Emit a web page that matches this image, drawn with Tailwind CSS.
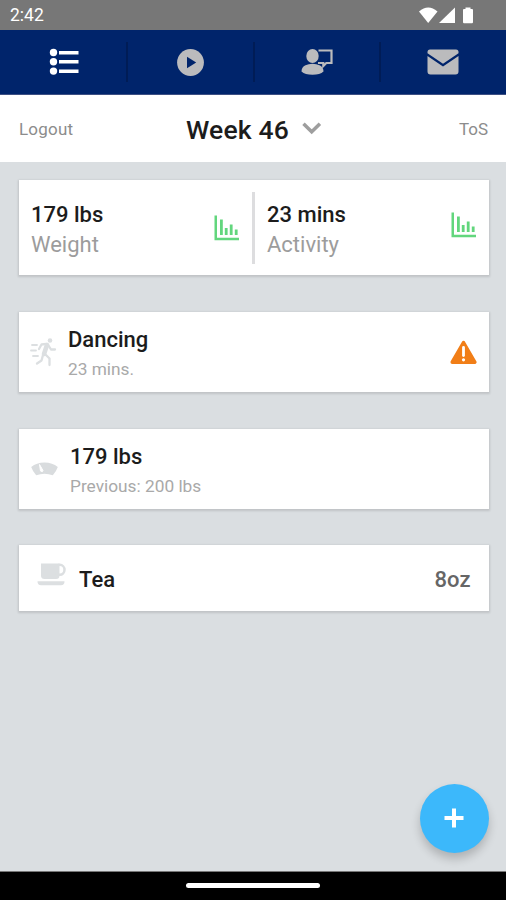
<!DOCTYPE html>
<html lang="en">
<head>
    <meta charset="UTF-8">
    <meta name="viewport" content="width=device-width, initial-scale=1.0">
    <title>Week 46</title>
    <script src="https://cdn.jsdelivr.net/npm/@tailwindcss/browser@4"></script>
</head>
<body class="bg-[#dadee1] font-['Roboto',sans-serif]">
    <div class="w-[506px] h-[900px] flex flex-col overflow-hidden whitespace-nowrap">

        <!-- Status bar -->
        <div class="h-[30px] shrink-0 bg-[#777777] text-white flex items-center justify-between pl-[10px] pr-[32px]">
            <span class="text-[17.500px] leading-none pt-[2px]">2:42</span>
            <svg class="w-[55px] h-[17px]" viewBox="0 0 55 17" fill="#fff">
                <path d="M0 4.500Q9.200-3.500 18.500 4.500L9.200 16z"/>
                <path d="M20 16L36 0.500V16z"/>
                <path d="M46.500 0.500h5v1.500h1.500q1 0 1 1v12q0 1.200-1 1.200h-8q-1 0-1-1.200V3q0-1 1-1h1.500z"/>
            </svg>
        </div>

        <!-- Tabs -->
        <nav class="h-[65px] shrink-0 bg-[#00246b] grid grid-cols-[127px_127px_126px_126px] border-b border-[#3d4f83]">
            <a class="flex items-center justify-center relative">
                <svg class="w-[30px] h-[28px]" viewBox="0 0 30 28" fill="#fff">
                    <circle cx="4.500" cy="4.500" r="3.700"/>
                    <circle cx="4.500" cy="13.800" r="3.700"/>
                    <circle cx="4.500" cy="23.100" r="3.700"/>
                    <path d="M10 2.900h19.500v3.500H10zM10 12.100h19.500v3.500H10zM10 21.400h19.500v3.500H10z"/>
                </svg>
                <span class="absolute -right-px top-3 w-[2px] h-10 bg-[#001c56]"></span>
            </a>
            <a class="flex items-center justify-center relative">
                <svg class="w-[28px] h-[28px]" viewBox="0 0 28 28">
                    <circle cx="13.500" cy="14.500" r="13.400" fill="#bbbbbd"/>
                    <path d="M10 8.700v11.600l9.200-5.800z" fill="#00246b"/>
                </svg>
                <span class="absolute -right-px top-3 w-[2px] h-10 bg-[#001c56]"></span>
            </a>
            <a class="flex items-center justify-center relative">
                <svg class="w-[32px] h-[28px]" viewBox="0 0 32 28" fill="#bbbbbd">
                    <path d="M17.500 2.500h13v12.500h-5.200l-3 3v-3H17" fill="none" stroke="#bbbbbd" stroke-width="2.200"/>
                    <ellipse cx="11.500" cy="8" rx="6.200" ry="7"/>
                    <path d="M0.500 23.500q0-4.500 4-6.300 3-1.500 7-1.500t7 1.500q4 1.800 4 6.300-3.500 3.300-11 3.300t-11-3.300z"/>
                </svg>
                <span class="absolute -right-px top-3 w-[2px] h-10 bg-[#001c56]"></span>
            </a>
            <a class="flex items-center justify-center">
                <svg class="w-[32px] h-[26px]" viewBox="0 0 32 26" fill="#bbbbbd">
                    <path d="M3 0.500h26q2.500 0 2.500 2.500v1.200L16 14.800 0.500 4.200V3Q0.500 0.500 3 0.500z"/>
                    <path d="M0.500 7L16 17.500 31.500 7v15.500q0 3-3 3h-25q-3 0-3-3z"/>
                </svg>
            </a>
        </nav>

        <!-- Week picker -->
        <header class="h-[67px] shrink-0 bg-white grid grid-cols-[1fr_auto_1fr] items-center px-[18px]">
            <a class="text-[17px] text-[#8c8c8c] tracking-[0.2px] pl-px pt-[2px]">Logout</a>
            <div class="flex items-center gap-[13px] pt-[4px]">
                <h1 class="text-[26.500px] leading-none font-medium text-[#1c1c1c] tracking-[0.2px] pl-[2px]">Week 46</h1>
                <svg class="w-[20px] h-[13px] mb-[4px]" viewBox="0 0 20 13" fill="none" stroke="#9e9e9e" stroke-width="3.500">
                    <path d="M1.500 1.800l8.200 8 8.200-8"/>
                </svg>
            </div>
            <a class="text-[17px] text-[#8c8c8c] text-right pt-[2px]">ToS</a>
        </header>

        <main class="flex-1 pl-[19px] pr-[17.500px] pt-[18px] flex flex-col">

            <!-- Totals -->
            <section class="h-[95px] bg-white shadow-[0_1px_2px_1px_rgba(0,0,0,0.12)] flex items-center">
                <div class="w-[233px] h-full flex justify-between pl-[12px] pr-[12px]">
                    <div class="pt-[21px]">
                        <p class="text-[22px] leading-[28px] font-medium text-[#1c1c1c]">179 lbs</p>
                        <p class="text-[22px] leading-[31px] text-[#9c9c9c]">Weight</p>
                    </div>
                    <svg class="w-[26px] h-[26px] mt-[35px]" viewBox="0 0 26 26" fill="#62d67d">
                        <path d="M0.500 0.500h2.500v22.200h22v2.500H0.500z"/>
                        <path d="M6 4.500h2.800v15.500H6zM10.800 13h2.800v7h-2.800zM15.800 9.500h2.800v10.500h-2.800zM20.800 14.500h2.800v5.500h-2.800z"/>
                    </svg>
                </div>
                <div class="w-[3px] h-[72px] bg-[#dddddf]"></div>
                <div class="flex-1 h-full flex justify-between pl-[12px] pr-[11.500px]">
                    <div class="pt-[21px]">
                        <p class="text-[22px] leading-[28px] font-medium text-[#1c1c1c]">23 mins</p>
                        <p class="text-[22px] leading-[31px] text-[#9c9c9c]">Activity</p>
                    </div>
                    <svg class="w-[26px] h-[26px] mt-[32px]" viewBox="0 0 26 26" fill="#62d67d">
                        <path d="M0.500 0.500h2.500v22.200h22v2.500H0.500z"/>
                        <path d="M6 4.500h2.800v15.500H6zM10.800 13h2.800v7h-2.800zM15.800 9.500h2.800v10.500h-2.800zM20.800 14.500h2.800v5.500h-2.800z"/>
                    </svg>
                </div>
            </section>

            <!-- Activity -->
            <section class="h-[80px] mt-[37px] bg-white shadow-[0_1px_2px_1px_rgba(0,0,0,0.12)] flex items-center pl-[11px] pr-[12px]">
                <svg class="w-[27px] h-[30px]" viewBox="0 0 27 30" fill="none" stroke="#dcdfe1" stroke-width="2.300" stroke-linecap="round" stroke-linejoin="round">
                    <circle cx="20" cy="3.500" r="2.300" fill="#dcdfe1" stroke="none"/>
                    <path d="M17 8l-3 9" stroke-width="4.600"/>
                    <path d="M16.500 6.800l-5 .7-2.500 4.500M18.500 8.500l2.500 4h4M15 17l4.500 4.500v6.500M13 18l-1.500 5.500-4.500 3"/>
                    <path d="M2 8h5M1 13.500h5M3 19h5" stroke-width="1.800"/>
                </svg>
                <div class="flex-1 pl-[11px] pt-[4px]">
                    <p class="text-[22px] leading-[30px] font-medium text-[#1c1c1c]">Dancing</p>
                    <p class="text-[17.300px] leading-[28px] text-[#a9a9a9]">23 mins.</p>
                </div>
                <svg class="w-[27px] h-[25px]" viewBox="0 0 27 25">
                    <path d="M13.500 2.500L24.800 22.200H2.200z" fill="#f17e17" stroke="#f17e17" stroke-width="3.500" stroke-linejoin="round"/>
                    <path d="M13.500 7.500v8" stroke="#fff" stroke-width="2.800" stroke-linecap="round"/>
                    <circle cx="13.500" cy="19.800" r="1.600" fill="#fff"/>
                </svg>
            </section>

            <!-- Weight -->
            <section class="h-[80px] mt-[37px] bg-white shadow-[0_1px_2px_1px_rgba(0,0,0,0.12)] flex items-center pl-[12px]">
                <svg class="w-[27px] h-[14px]" viewBox="0 0 27 14">
                    <path d="M0.200 5Q5.500 0.500 13.500 0.500T26.800 5q-1.500 4.500-5 8.200-8.300-3-16.600 0Q1.700 9.500 0.200 5z" fill="#d9dcde"/>
                    <path d="M8.500 2.500l1 6.500q2.500 1.500 2.500-.5z" fill="#fff" stroke="#fff" stroke-width="1"/>
                </svg>
                <div class="pl-[12px] pt-[4px]">
                    <p class="text-[22px] leading-[30px] font-medium text-[#1c1c1c]">179 lbs</p>
                    <p class="text-[17.300px] leading-[28px] text-[#a9a9a9]">Previous: 200 lbs</p>
                </div>
            </section>

            <!-- Drink -->
            <section class="h-[66px] mt-[36px] bg-white shadow-[0_1px_2px_1px_rgba(0,0,0,0.12)] flex items-center pl-[18px] pr-[18px]">
                <svg class="w-[29px] h-[23px] mb-[8px]" viewBox="0 0 29 23" fill="#dcdfe1">
                    <path d="M4 0.500h18.500v12q0 3.500-3.500 3.500H7.500q-3.500 0-3.500-3.500z"/>
                    <ellipse cx="22.800" cy="6.800" rx="4.700" ry="5" fill="none" stroke="#dcdfe1" stroke-width="2.500"/>
                    <path d="M0.500 18.200H27.500q0 4-3.500 4H4q-3.500 0-3.500-4z"/>
                </svg>
                <p class="flex-1 pl-[13px] pt-[2px] text-[22px] font-medium text-[#1c1c1c]">Tea</p>
                <p class="pt-[2px] text-[22px] font-medium text-[#666666]">8oz</p>
            </section>

            <!-- Add button -->
            <button class="mt-auto mb-[18px] self-end size-[69px] rounded-full bg-[#3cb8fb] shadow-[0_6px_10px_rgba(0,0,0,0.2)] flex items-center justify-center">
                <svg class="size-[20px]" viewBox="0 0 20 20" fill="none" stroke="#fff" stroke-width="4">
                    <path d="M10 0.500v19M0.500 10h19"/>
                </svg>
            </button>
        </main>

        <!-- Gesture bar -->
        <div class="h-[29.500px] shrink-0 bg-black border-t border-[#777777] flex items-center justify-center">
            <div class="w-[134px] h-[5px] rounded-full bg-white"></div>
        </div>
    </div>
</body>
</html>
